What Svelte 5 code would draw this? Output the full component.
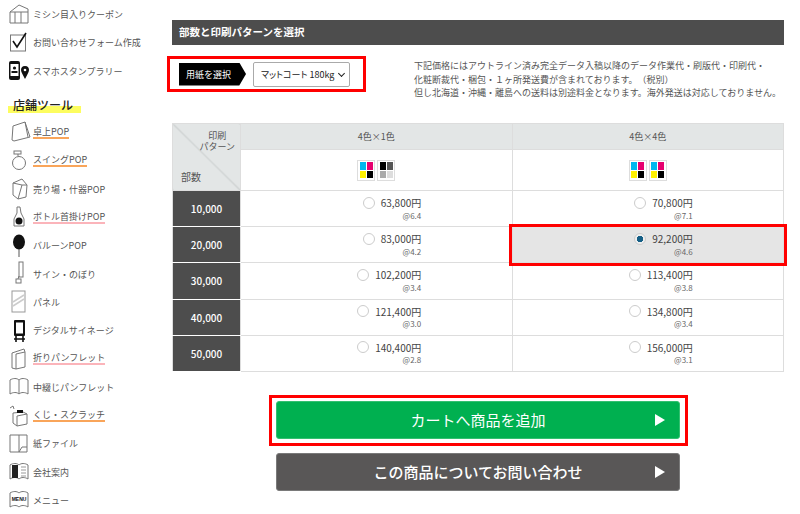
<script>
  const g = 'fill="none" stroke="#777" stroke-width="1"'
  const book = "M2 6c3-2 7-2 9 0 2-2 6-2 9 0v14c-3-2-7-2-9 0-2-2-6-2-9 0z"
  const top = [
    { label: "ミシン目入りクーポン", icon: `<g ${g}><path d="M2 10 11 3l9 4v14H7V10zM2 10v11h5M13 10v11M7 10h13"/></g>` },
    { label: "お問い合わせフォーム作成", icon: `<rect x="2.5" y="5" width="15" height="16" fill="none" stroke="#777"/><path d="M5 11l4 6 9-14" fill="none" stroke="#111" stroke-width="1.6"/>` },
    { label: "スマホスタンプラリー", icon: `<rect x="1" y="3" width="11" height="19" rx="2" fill="#111"/><rect x="2.5" y="6" width="8" height="12" fill="#fff"/><circle cx="6.5" cy="10" r="1.6" fill="#111"/><rect x="3.5" y="13" width="6" height="2" fill="#111"/><path d="M17 8c-3 0-4 2-4 4 0 2 2 5 4 9 2-4 4-7 4-9 0-2-1-4-4-4z" fill="#111"/><circle cx="17" cy="12" r="1.3" fill="#fff"/>` }
  ]
  const tools = [
    { label: "卓上POP", line: "orange", icon: `<g ${g}><path d="M5 6l12-4 5 15-16 4-2-1zM17 2l3 15"/></g>` },
    { label: "スイングPOP", line: "orange", icon: `<g ${g}><circle cx="11" cy="15" r="6.5"/><rect x="6" y="3" width="7" height="3"/><path d="M10 6v2"/></g>` },
    { label: "売り場・什器POP", icon: `<g ${g}><path d="M5 7l9-4 5 6-1 12-8 2-5-4zM14 9l-4 14M14 9l5 0M5 7l9 2"/></g>` },
    { label: "ボトル首掛けPOP", line: "pink", icon: `<path d="M9 3h3l1 6 3 6v7H6v-7l3-6z" fill="none" stroke="#777"/><circle cx="11" cy="17" r="3.5" fill="#111"/>` },
    { label: "バルーンPOP", icon: `<ellipse cx="11" cy="9" rx="6" ry="7.5" fill="#111"/><path d="M11 16v8" stroke="#555"/>` },
    { label: "サイン・のぼり", icon: `<g ${g}><rect x="11" y="1" width="4" height="15"/><rect x="8" y="18" width="5" height="4"/><path d="M11 15l-1 3"/></g>` },
    { label: "パネル", icon: `<rect x="4" y="2" width="13" height="21" fill="none" stroke="#999"/><path d="M5 13l11-7M5 17l11-7" stroke="#ccc" stroke-width="1.5"/>` },
    { label: "デジタルサイネージ", icon: `<rect x="6" y="2" width="11" height="16" rx="1" fill="#111"/><rect x="8" y="4.5" width="7" height="11" fill="#fff"/><path d="M8 18v6M15 18v6M6 21h11" stroke="#111" stroke-width="1.6"/>` },
    { label: "折りパンフレット", line: "pink", icon: `<g ${g}><path d="M4 7l12-4 1 3v15l-9 2-4-1zM8 8v15M8 8l9-2"/></g>` },
    { label: "中綴じパンフレット", icon: `<g ${g}><path d="${book}M11 6v14"/></g>` },
    { label: "くじ・スクラッチ", line: "orange", icon: `<g ${g}><path d="M5 10l10-1 4 2v10l-10 2-4-3zM9 13l10-2M9 13v10"/><path d="M2 5l3-2 1 3"/></g><rect x="9" y="7" width="6" height="3" fill="#111"/>` },
    { label: "紙ファイル", icon: `<g ${g}><path d="M2 4h17v17H2zM11 4v17M11 21l3-5h5"/></g>` },
    { label: "会社案内", icon: `<g ${g}><path d="${book}"/></g><rect x="4" y="6" width="6" height="13" fill="#222"/><path d="M13 8h5M13 11h5M13 14h5M13 17h5" stroke="#999"/>` },
    { label: "メニュー", icon: `<g ${g}><path d="${book}"/></g><text x="11" y="14" text-anchor="middle" font-size="5" font-weight="700" font-family="Liberation Sans, sans-serif" fill="#111">MENU</text>` }
  ]
  const color = ["#00b7ee", "#e6006f", "#fff100", "#000"]
  const mono = ["#000", "#555", "#aaa", "#ddd"]
  const rows = [
    { qty: "10,000", a: ["63,800円", "@6.4"], b: ["70,800円", "@7.1"] },
    { qty: "20,000", a: ["83,000円", "@4.2"], b: ["92,200円", "@4.6"], picked: true },
    { qty: "30,000", a: ["102,200円", "@3.4"], b: ["113,400円", "@3.8"] },
    { qty: "40,000", a: ["121,400円", "@3.0"], b: ["134,800円", "@3.4"] },
    { qty: "50,000", a: ["140,400円", "@2.8"], b: ["156,000円", "@3.1"] }
  ]
</script>

{#snippet swatch(list)}
  <span class="swatch">
    {#each list as c}<i style="background:{c}"></i>{/each}
  </span>
{/snippet}

{#snippet navRow(item)}
  <li class="navRow">
    <svg class="navIcon" viewBox="0 0 24 25" width="24" height="25">{@html item.icon}</svg>
    <span class={item.line ? "navText " + item.line : "navText"}>{item.label}</span>
  </li>
{/snippet}

{#snippet price(p, on)}
  <div class="price">
    <div class="priceLine"><span class={on ? "radio on" : "radio"}></span>{p[0]}</div>
    <div class="unit">{p[1]}</div>
  </div>
{/snippet}

<div class="page">
  <!--사이드-->
  <aside class="side">
    <ul>
      {#each top as item}{@render navRow(item)}{/each}
    </ul>
    <h3 class="toolHead"><span>店舗ツール</span></h3>
    <ul>
      {#each tools as item}{@render navRow(item)}{/each}
    </ul>
  </aside>

  <!--메인-->
  <main class="main">
    <h2 class="bar">部数と印刷パターンを選択</h2>

    <div class="paperRow">
      <div class="paperBox">
        <span class="paperLabel">用紙を選択</span>
        <div class="selectWrap">
          <select class="paperSelect">
            <option>マットコート 180kg</option>
          </select>
          <span class="chevron"></span>
        </div>
      </div>
      <p class="note">
        下記価格にはアウトライン済み完全データ入稿以降のデータ作業代・刷版代・印刷代・<br>
        化粧断裁代・梱包・１ヶ所発送費が含まれております。（税別）<br>
        但し北海道・沖縄・離島への送料は別途料金となります。海外発送は対応しておりません。
      </p>
    </div>

    <table class="priceTable">
      <colgroup><col class="c0"><col><col></colgroup>
      <thead>
        <tr class="headRow">
          <th rowspan="2" class="corner">
            <div class="cornerIn">
              <span class="cornerTop">印刷<br>パターン</span>
              <span class="cornerBottom">部数</span>
            </div>
          </th>
          <th>4色×1色</th>
          <th>4色×4色</th>
        </tr>
        <tr class="iconRow">
          <td>{@render swatch(color)}{@render swatch(mono)}</td>
          <td>{@render swatch(color)}{@render swatch(color)}</td>
        </tr>
      </thead>
      <tbody>
        {#each rows as r}
          <tr class="priceRow">
            <th class="qty">{r.qty}</th>
            <td>{@render price(r.a, false)}</td>
            <td class={r.picked ? "picked" : ""}>{@render price(r.b, r.picked)}</td>
          </tr>
        {/each}
      </tbody>
    </table>

    <div class="actions">
      <div class="cartBox">
        <button class="btn green">カートへ商品を追加<span class="arrow"></span></button>
      </div>
      <button class="btn gray">この商品についてお問い合わせ<span class="arrow"></span></button>
    </div>
  </main>
</div>

<style>
:global(body) {
  margin: 0;
  background: #fff;
}
.page {
  display: flex;
  width: 800px;
  height: 514px;
  overflow: hidden;
  font-family: "Noto Sans CJK JP", "Noto Sans", sans-serif;
  color: #444;
  text-spacing-trim: space-all;
}
.side {
  width: 172px;
  flex: none;
}
ul {
  list-style: none;
  margin: 0;
  padding: 0;
}
.navRow {
  display: flex;
  align-items: center;
  height: 28.3px;
  padding-left: 8px;
  font-size: 9px;
  color: #555;
}
.navIcon {
  flex: none;
  margin-right: 1px;
}
.navText {
  position: relative;
  top: 1px;
  line-height: 10px;
}
.orange {
  border-bottom: 2px solid #f9a55a;
}
.pink {
  border-bottom: 2px solid #fbb4ba;
}
.toolHead {
  margin: 0;
  height: 33px;
  padding: 13px 0 0 8px;
  box-sizing: border-box;
  font-size: 12px;
  font-weight: 500;
  line-height: 14px;
  color: #222;
}
.toolHead span {
  display: block;
  width: 73px;
  height: 16px;
  padding-left: 5px;
  box-sizing: border-box;
  background: linear-gradient(transparent 8px, #fdfd5f 8px, #fdfd5f 15px, transparent 15px);
}
.main {
  width: 612px;
  flex: none;
}
.bar {
  margin: 20px 0 0;
  height: 25px;
  padding-left: 7px;
  background: #4d4d4d;
  color: #fff;
  font-size: 10.5px;
  font-weight: 700;
  line-height: 24px;
}
.paperRow {
  display: flex;
  height: 36px;
  margin: 11px 0 31px -5px;
}
.paperBox {
  display: flex;
  align-items: center;
  box-sizing: border-box;
  width: 199px;
  height: 36px;
  padding-left: 9px;
  border: 3px solid #f00;
}
.paperLabel {
  width: 67px;
  height: 23px;
  padding-left: 7px;
  box-sizing: border-box;
  background: #000;
  color: #fff;
  font-size: 9px;
  line-height: 23px;
  clip-path: polygon(0 0, 90% 0, 100% 50%, 90% 100%, 0 100%);
}
.selectWrap {
  position: relative;
  margin-left: 7px;
}
.paperSelect {
  display: block;
  appearance: none;
  width: 97px;
  height: 25px;
  padding: 0 0 0 7px;
  background: #fff;
  border: 1px solid #aaa;
  border-radius: 2px;
  font-family: inherit;
  font-size: 9px;
  font-feature-settings: "palt";
  color: #222;
}
.chevron {
  position: absolute;
  right: 6px;
  top: 9px;
  width: 4px;
  height: 4px;
  border-right: 1.5px solid #222;
  border-bottom: 1.5px solid #222;
  transform: rotate(45deg);
  pointer-events: none;
}
.note {
  margin: 3px 0 0 48px;
  font-size: 9px;
  line-height: 13.5px;
  white-space: nowrap;
  color: #555;
}
.priceTable {
  width: 612px;
  border-collapse: collapse;
  table-layout: fixed;
  font-size: 9px;
}
.c0 {
  width: 68px;
}
.priceTable th,
.priceTable td {
  border: 1px solid #ddd;
  padding: 0;
  text-align: center;
}
.headRow {
  height: 26px;
}
.headRow th {
  background: #e3e6e6;
  font-weight: 400;
  color: #555;
}
.iconRow {
  height: 41px;
}
.priceTable .corner {
  vertical-align: top;
  background: linear-gradient(to top right, #e3e6e6 calc(50% - 1px), #c8cccc 50%, #e3e6e6 calc(50% + 1px));
}
.cornerIn {
  display: flex;
  flex-direction: column;
  justify-content: space-between;
  box-sizing: border-box;
  height: 58px;
  padding: 6px 5px 0 8px;
  line-height: 11px;
}
.cornerTop {
  align-self: flex-end;
  text-align: center;
}
.cornerBottom {
  align-self: flex-start;
  font-size: 10px;
}
.swatch {
  display: inline-grid;
  grid-template-columns: 6px 6px;
  grid-auto-rows: 7.5px;
  gap: 1px;
  padding: 1.5px;
  margin: 0 1px;
  border: 1px solid #ddd;
  vertical-align: middle;
}
.swatch i {
  display: block;
}
.priceRow {
  height: 36.2px;
}
.priceTable .qty {
  background: #4d4d4d;
  color: #fff;
  font-size: 10px;
  font-weight: 500;
  border-color: #fff #ddd;
}
.price {
  width: 90px;
  margin: 0 auto;
  text-align: right;
}
.priceLine {
  display: flex;
  align-items: center;
  justify-content: flex-end;
  height: 14px;
  margin-top: -1px;
  font-size: 10px;
  color: #444;
}
.radio {
  width: 12px;
  height: 12px;
  margin-right: 6px;
  box-sizing: border-box;
  background: #fff;
  border: 1px solid #ccc;
  border-radius: 50%;
}
.radio.on {
  background: radial-gradient(circle, #155f86 0 3px, #eee 3.5px);
}
.unit {
  font-size: 8px;
  line-height: 11px;
  color: #666;
}
.priceTable .picked {
  background: #e5e5e5;
  outline: 3px solid #f00;
  outline-offset: 0;
}
.actions {
  display: flex;
  flex-direction: column;
  align-items: center;
  margin-top: 23px;
}
.cartBox {
  box-sizing: border-box;
  width: 419px;
  height: 51px;
  padding: 3px 0 4px;
  margin-bottom: 7px;
  display: flex;
  justify-content: center;
  border: 3px solid #f00;
}
.btn {
  position: relative;
  width: 404px;
  height: 38px;
  padding: 0;
  border-radius: 3px;
  border: 1px solid transparent;
  color: #fff;
  font-family: inherit;
  font-size: 15px;
  font-weight: 400;
}
.green {
  background: #00b050;
  border-color: #33c070;
}
.gray {
  background: #595757;
  border-color: #7a7a7a;
  font-weight: 500;
}
.arrow {
  position: absolute;
  right: 14px;
  top: 12px;
  width: 0;
  height: 0;
  border-left: 10px solid #fff;
  border-top: 6px solid transparent;
  border-bottom: 6px solid transparent;
}
</style>
